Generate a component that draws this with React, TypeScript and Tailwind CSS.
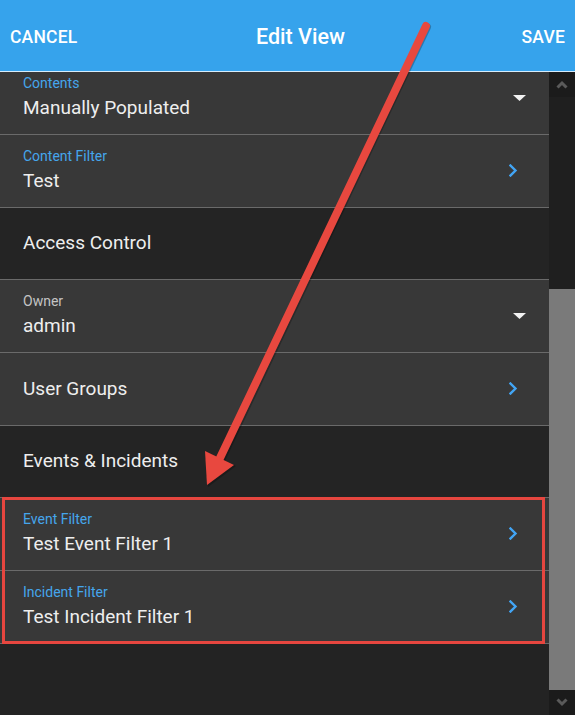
import React from "react";

function Caret() {
  return (
    <svg width="13" height="6" viewBox="0 0 13 6" className="block">
      <polygon points="0,0 13,0 6.5,6" fill="#f2f2f2" />
    </svg>
  );
}

function Chevron() {
  return (
    <svg width="9" height="13" viewBox="0 0 9 13" className="block">
      <polyline points="1.5,1.5 6.5,6.5 1.5,11.5" fill="none" stroke="#42a5f5" strokeWidth="2.4" strokeLinecap="square" />
    </svg>
  );
}

function FieldRow({ label, value, blue, icon }: { label: string; value: string; blue?: boolean; icon: "caret" | "chevron" }) {
  return (
    <div className="h-[72.7px] shrink-0 border-b border-[#6a6a6a] bg-[#383838] flex items-start pl-[23px]">
      <div className="flex flex-col pt-[13px]">
        <div className={`text-[14px] leading-[16px] ${blue ? "text-[#45a6ec]" : "text-[#c4c4c4]"}`}>{label}</div>
        <div className="mt-[5px] text-[19px] leading-[24px] text-[#eeeeee]">{value}</div>
      </div>
      {icon === "caret" ? (
        <div className="ml-auto mr-[23px] mt-[33px]">
          <Caret />
        </div>
      ) : (
        <div className="ml-auto mr-[31px] mt-[29px]">
          <Chevron />
        </div>
      )}
    </div>
  );
}

function SimpleRow({ text, chevron }: { text: string; chevron?: boolean }) {
  return (
    <div className="h-[72.7px] shrink-0 border-b border-[#6a6a6a] bg-[#383838] flex items-center pl-[23px]">
      <div className="text-[19px] leading-[24px] text-[#eeeeee] mt-[1px]">{text}</div>
      {chevron && (
        <div className="ml-auto mr-[31px]">
          <Chevron />
        </div>
      )}
    </div>
  );
}

function SectionRow({ text }: { text: string }) {
  return (
    <div className="h-[72.7px] shrink-0 border-b border-[#6a6a6a] bg-[#242424] flex items-center pl-[23px]">
      <div className="text-[19px] leading-[24px] text-[#eeeeee] -mt-[1px]">{text}</div>
    </div>
  );
}

export default function App() {
  return (
    <div className="relative w-[575px] h-[715px] overflow-hidden bg-[#232323] flex flex-col font-['Roboto',sans-serif]">
      <div className="h-[72px] shrink-0 bg-[#36a3ec] border-b border-[#d6ecfb] flex items-center justify-between px-[10px] pt-[3px]">
        <div className="text-[17.5px] font-medium text-white tracking-[0.2px]">CANCEL</div>
        <div className="text-[21.5px] font-medium text-white ml-[2px]">Edit View</div>
        <div className="text-[17.5px] font-medium text-white tracking-[0.2px]">SAVE</div>
      </div>
      <div className="flex flex-1 min-h-0">
        <div className="flex-1 overflow-hidden">
          <div className="-mt-[9.7px] flex flex-col">
            <FieldRow label="Contents" value="Manually Populated" blue icon="caret" />
            <FieldRow label="Content Filter" value="Test" blue icon="chevron" />
            <SectionRow text="Access Control" />
            <FieldRow label="Owner" value="admin" icon="caret" />
            <SimpleRow text="User Groups" chevron />
            <SectionRow text="Events & Incidents" />
            <FieldRow label="Event Filter" value="Test Event Filter 1" blue icon="chevron" />
            <FieldRow label="Incident Filter" value="Test Incident Filter 1" blue icon="chevron" />
          </div>
        </div>
        <div className="w-[26px] shrink-0 flex flex-col bg-[#1f1f1f]">
          <div className="h-[25px] shrink-0 bg-[#1b1b1b] flex items-center justify-center">
            <svg width="12" height="9" viewBox="0 0 12 9" className="block">
              <polyline points="1.5,7.5 6,3 10.5,7.5" fill="none" stroke="#5a5a5a" strokeWidth="3" />
            </svg>
          </div>
          <div className="h-[192px] shrink-0" />
          <div className="flex-1 bg-[#7a7a7a]" />
          <div className="h-[25px] shrink-0 bg-[#1b1b1b] flex items-center justify-center">
            <svg width="12" height="9" viewBox="0 0 12 9" className="block">
              <polyline points="1.5,1.5 6,6 10.5,1.5" fill="none" stroke="#5a5a5a" strokeWidth="3" />
            </svg>
          </div>
        </div>
      </div>

      <div className="absolute left-[2px] top-[497px] w-[543px] h-[147px] border-[3px] border-[#e6463f] pointer-events-none" />

      <svg className="absolute left-0 top-0 pointer-events-none" width="575" height="715" viewBox="0 0 575 715">
        <line x1="427" y1="27" x2="221" y2="460" stroke="#000" strokeOpacity="0.25" strokeWidth="8" strokeLinecap="round" />
        <polygon points="208,487 206,452 236,466" fill="#000" fillOpacity="0.25" />
        <line x1="426" y1="26" x2="220" y2="458" stroke="#e8483f" strokeWidth="8" strokeLinecap="round" />
        <polygon points="207,485 205,451 234,465" fill="#e8483f" />
      </svg>
    </div>
  );
}
